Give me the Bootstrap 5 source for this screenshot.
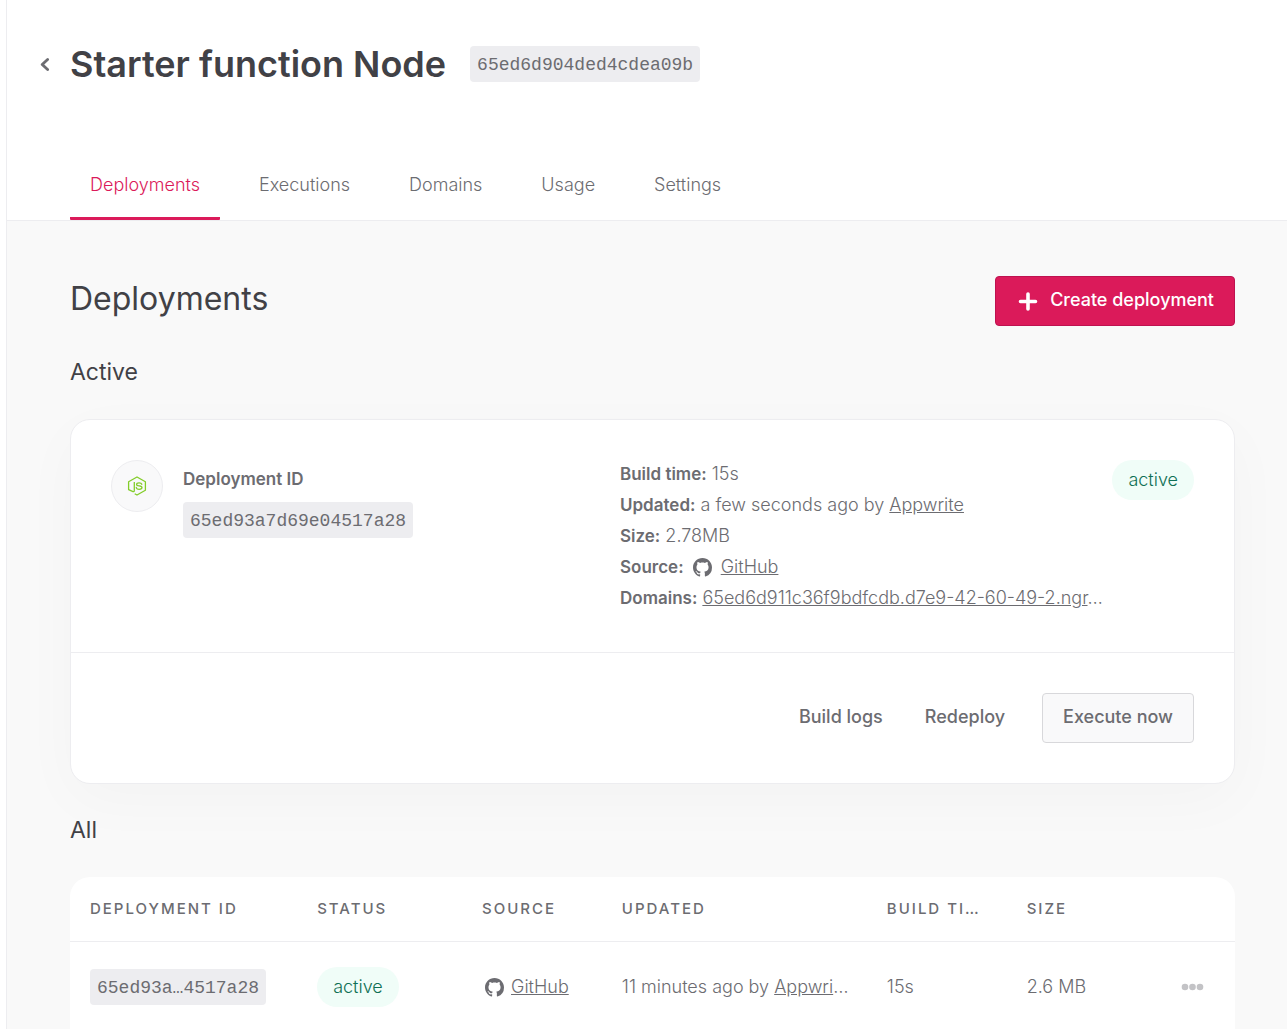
<!DOCTYPE html>
<html lang="en">
<head>
<meta charset="utf-8">
<meta name="viewport" content="width=device-width, initial-scale=1">
<title>Starter function Node – Deployments</title>
<link href="https://cdn.jsdelivr.net/npm/bootstrap@5.3.0/dist/css/bootstrap.min.css" rel="stylesheet">
<style>
  :root { --line: #ededf0; --ink: #414146; --soft: #6c6c71; --pink: #db1a5a; }
  body { font-family: Inter, "Liberation Sans", sans-serif; font-size: 18px; font-weight: 300; line-height: 23px; color: var(--soft); background: #fff; }
  .console { margin-left: 6px; border-left: 1px solid var(--line); background: #f9f9f9; }
  .inset { padding-left: 63px; padding-right: 52px; }
  .page-head { background: #fff; border-bottom: 1px solid var(--line); }
  .head-row { padding-top: 40px; gap: 20px; }
  .back-link { width: 10px; margin-left: -30px; color: var(--soft); line-height: 0; }
  h1, h2, h3 { color: var(--ink); margin: 0; }
  h1 { font-size: 36px; font-weight: 600; line-height: 48px; }
  h2 { font-size: 32px; font-weight: 400; line-height: 46px; }
  h3 { font-size: 23px; font-weight: 400; line-height: 32px; }
  .id-chip { display: inline-block; font-family: "Liberation Mono", monospace; font-size: 18px; line-height: 34px; padding: 2px 7px 0; border-radius: 4px; background: var(--line); color: var(--soft); border: 0; white-space: nowrap; }
  .tabs { margin-top: 62px; }
  .tabs .nav-link { color: var(--soft); padding: 23px 20px 21px; border-bottom: 3px solid transparent; line-height: 23px; }
  .tabs .nav-item + .nav-item { margin-left: 19px; }
  .tabs .nav-link.active { color: var(--pink); border-bottom-color: var(--pink); border-radius: 0 0 1px 1px; }
  .body-area { padding-top: 55px; }
  .action { font-size: 18px; font-weight: 500; line-height: 24px; padding: 11px 20px 13px; border-radius: 4px; color: var(--soft); }
  .action-main { color: #fff; background: var(--pink); border-color: #be1250; }
  .action-main:hover { color: #fff; background: #be1250; }
  .action-side { background: #f9f9fa; border-color: #d8d8db; }
  .active-title { margin: 30px 0 31px; }
  .deploy-card { border: 1px solid var(--line); border-radius: 20px; background: #fff; box-shadow: 0 16px 60px rgba(0,0,0,.028); }
  .card-top { padding: 40px; }
  .card-foot { padding: 40px; border-top: 1px solid var(--line); }
  .id-side { flex: 0 0 47%; }
  .runtime { width: 52px; height: 52px; border: 1px solid var(--line); background: #f9f9fa; flex: none; }
  .id-label { margin: 8px 0 11px; }
  strong, .strong-label { font-weight: 600; font-size: 17px; }
  strong { line-height: 17px; }
  .facts { display: grid; gap: 8px; padding: 2px 0 3px; }
  .facts > div { white-space: nowrap; overflow: hidden; text-overflow: ellipsis; }
  .plain { color: inherit; }
  .pill { display: inline-block; flex: none; line-height: 40px; padding: 0 16px; border-radius: 20px; background: #f0fdf8; color: #0f7055; }
  .all-title { margin: 30px 0 31px; }
  .deploy-table { table-layout: fixed; background: #fff; border-radius: 20px 20px 0 0; margin: 0; color: var(--soft); width: 100%; }
  .deploy-table th, .deploy-table td { padding: 0 16px 0 20px; vertical-align: middle; white-space: nowrap; overflow: hidden; text-overflow: ellipsis; }
  .deploy-table th { font-size: 15px; font-weight: 500; letter-spacing: 2px; text-transform: uppercase; height: 64px; border-bottom: 1px solid var(--line); }
  .deploy-table td { height: 91px; }
  .more { color: #c3c3c6; line-height: 0; padding: 8px 4px; }
  .gh { vertical-align: -4px; }
</style>
<script src="https://cdn.jsdelivr.net/npm/bootstrap@5.3.0/dist/js/bootstrap.bundle.min.js"></script>
</head>
<body>
<svg class="d-none" aria-hidden="true">
  <symbol id="github" viewBox="0 0 16 16"><path fill="currentColor" d="M8 0C3.58 0 0 3.58 0 8c0 3.54 2.29 6.53 5.47 7.59.4.07.55-.17.55-.38 0-.19-.01-.82-.01-1.49-2.01.37-2.53-.49-2.69-.94-.09-.23-.48-.94-.82-1.13-.28-.15-.68-.52-.01-.53.63-.01 1.08.58 1.23.82.72 1.21 1.87.87 2.33.66.07-.52.28-.87.51-1.07-1.78-.2-3.64-.89-3.64-3.95 0-.87.31-1.59.82-2.15-.08-.2-.36-1.02.08-2.12 0 0 .67-.21 2.2.82.64-.18 1.32-.27 2-.27s1.36.09 2 .27c1.53-1.04 2.2-.82 2.2-.82.44 1.1.16 1.92.08 2.12.51.56.82 1.27.82 2.15 0 3.07-1.87 3.75-3.65 3.95.29.25.54.73.54 1.48 0 1.07-.01 1.93-.01 2.2 0 .21.15.46.55.38A8.01 8.01 0 0 0 16 8c0-4.42-3.58-8-8-8z"/></symbol>
</svg>
<div class="console vh-100 overflow-hidden">
  <header class="page-head inset">
    <div class="head-row d-flex align-items-center">
      <a class="back-link" href="#" aria-label="Back to functions"><svg width="10" height="14" viewBox="0 0 10 14" fill="none" stroke="currentColor" stroke-width="2.8" stroke-linecap="round" stroke-linejoin="round"><path d="M7.600 2.500 2.200 7.500l5.400 5"/></svg></a>
      <h1 class="me-1">Starter function Node</h1>
      <button class="id-chip" type="button">65ed6d904ded4cdea09b</button>
    </div>
    <nav aria-label="Function sections">
      <ul class="nav tabs">
        <li class="nav-item"><a class="nav-link active" aria-current="page" href="#">Deployments</a></li>
        <li class="nav-item"><a class="nav-link" href="#">Executions</a></li>
        <li class="nav-item"><a class="nav-link" href="#">Domains</a></li>
        <li class="nav-item"><a class="nav-link" href="#">Usage</a></li>
        <li class="nav-item"><a class="nav-link" href="#">Settings</a></li>
      </ul>
    </nav>
  </header>
  <main class="body-area inset">
    <div class="d-flex justify-content-between align-items-start">
      <h2>Deployments</h2>
      <button type="button" class="btn action action-main d-flex align-items-center gap-2"><svg width="26" height="22" viewBox="0 0 26 22" fill="none" stroke="currentColor" stroke-width="3.6" stroke-linecap="round"><path d="M12 5v15M4.500 12.500h15"/></svg>Create deployment</button>
    </div>
    <h3 class="active-title">Active</h3>
    <section class="deploy-card" aria-label="Active deployment">
      <div class="card-top d-flex">
        <div class="id-side d-flex">
          <div class="runtime rounded-circle d-flex align-items-center justify-content-center me-3"><svg width="20" height="20" viewBox="0 0 20 20" fill="none" stroke="#83cd29" stroke-width="1.300" stroke-linejoin="round"><path d="M7.300 6v8.400q0 1.500-1.300 1.300L1.600 13.700V5.700L10 1l8.400 4.700v8.600L10 19l-2.300-1.300"/><path stroke-linecap="round" d="M14.800 8.300c-.3-1-1.100-1.400-2.700-1.400-1.700 0-2.500.5-2.500 1.500 0 2.400 5.400.6 5.400 3.200 0 1.100-.9 1.700-2.800 1.700-1.800 0-2.800-.6-2.900-1.800"/></svg></div>
          <div class="ms-1">
            <div class="id-label strong-label">Deployment ID</div>
            <button class="id-chip" type="button">65ed93a7d69e04517a28</button>
          </div>
        </div>
        <div class="flex-fill overflow-hidden d-flex align-items-start">
          <div class="facts flex-fill overflow-hidden">
            <div><strong>Build time:</strong> 15s</div>
            <div><strong>Updated:</strong> a few seconds ago by <a class="plain" href="#">Appwrite</a></div>
            <div><strong>Size:</strong> 2.78MB</div>
            <div><strong>Source:</strong> <svg class="gh ms-1 me-1" width="19" height="19"><use href="#github"/></svg> <a class="plain" href="#">GitHub</a></div>
            <div><strong>Domains:</strong> <a class="plain" href="#">65ed6d911c36f9bdfcdb.d7e9-42-60-49-2.ngr</a>…</div>
          </div>
          <span class="pill ms-1">active</span>
        </div>
      </div>
      <div class="card-foot d-flex justify-content-end">
        <button type="button" class="btn action">Build logs</button>
        <button type="button" class="btn action">Redeploy</button>
        <button type="button" class="btn action action-side ms-3">Execute now</button>
      </div>
    </section>
    <h3 class="all-title">All</h3>
    <table class="deploy-table">
      <colgroup><col style="width:19.5%"><col style="width:14.15%"><col style="width:12%"><col style="width:22.75%"><col style="width:12%"><col style="width:11.6%"><col></colgroup>
      <thead><tr><th scope="col">Deployment ID</th><th scope="col">Status</th><th scope="col">Source</th><th scope="col">Updated</th><th scope="col">Build time</th><th scope="col">Size</th><th aria-label="Actions"></th></tr></thead>
      <tbody><tr>
        <td><button class="id-chip" type="button">65ed93a…4517a28</button></td>
        <td><span class="pill">active</span></td>
        <td><svg class="gh me-1" width="25" height="19" viewBox="0 0 25 19"><use href="#github" x="3" width="19" height="19"/></svg><a class="plain" href="#">GitHub</a></td>
        <td>11 minutes ago by <a class="plain" href="#">Appwri</a>…</td>
        <td>15s</td>
        <td>2.6 MB</td>
        <td class="text-end"><button type="button" class="btn border-0 more" aria-label="More actions"><svg width="34" height="8" viewBox="0 0 34 8" fill="currentColor"><circle cx="4" cy="4" r="3.300"/><circle cx="11.500" cy="4" r="3.300"/><circle cx="19" cy="4" r="3.300"/></svg></button></td>
      </tr></tbody>
    </table>
  </main>
</div>
</body>
</html>
